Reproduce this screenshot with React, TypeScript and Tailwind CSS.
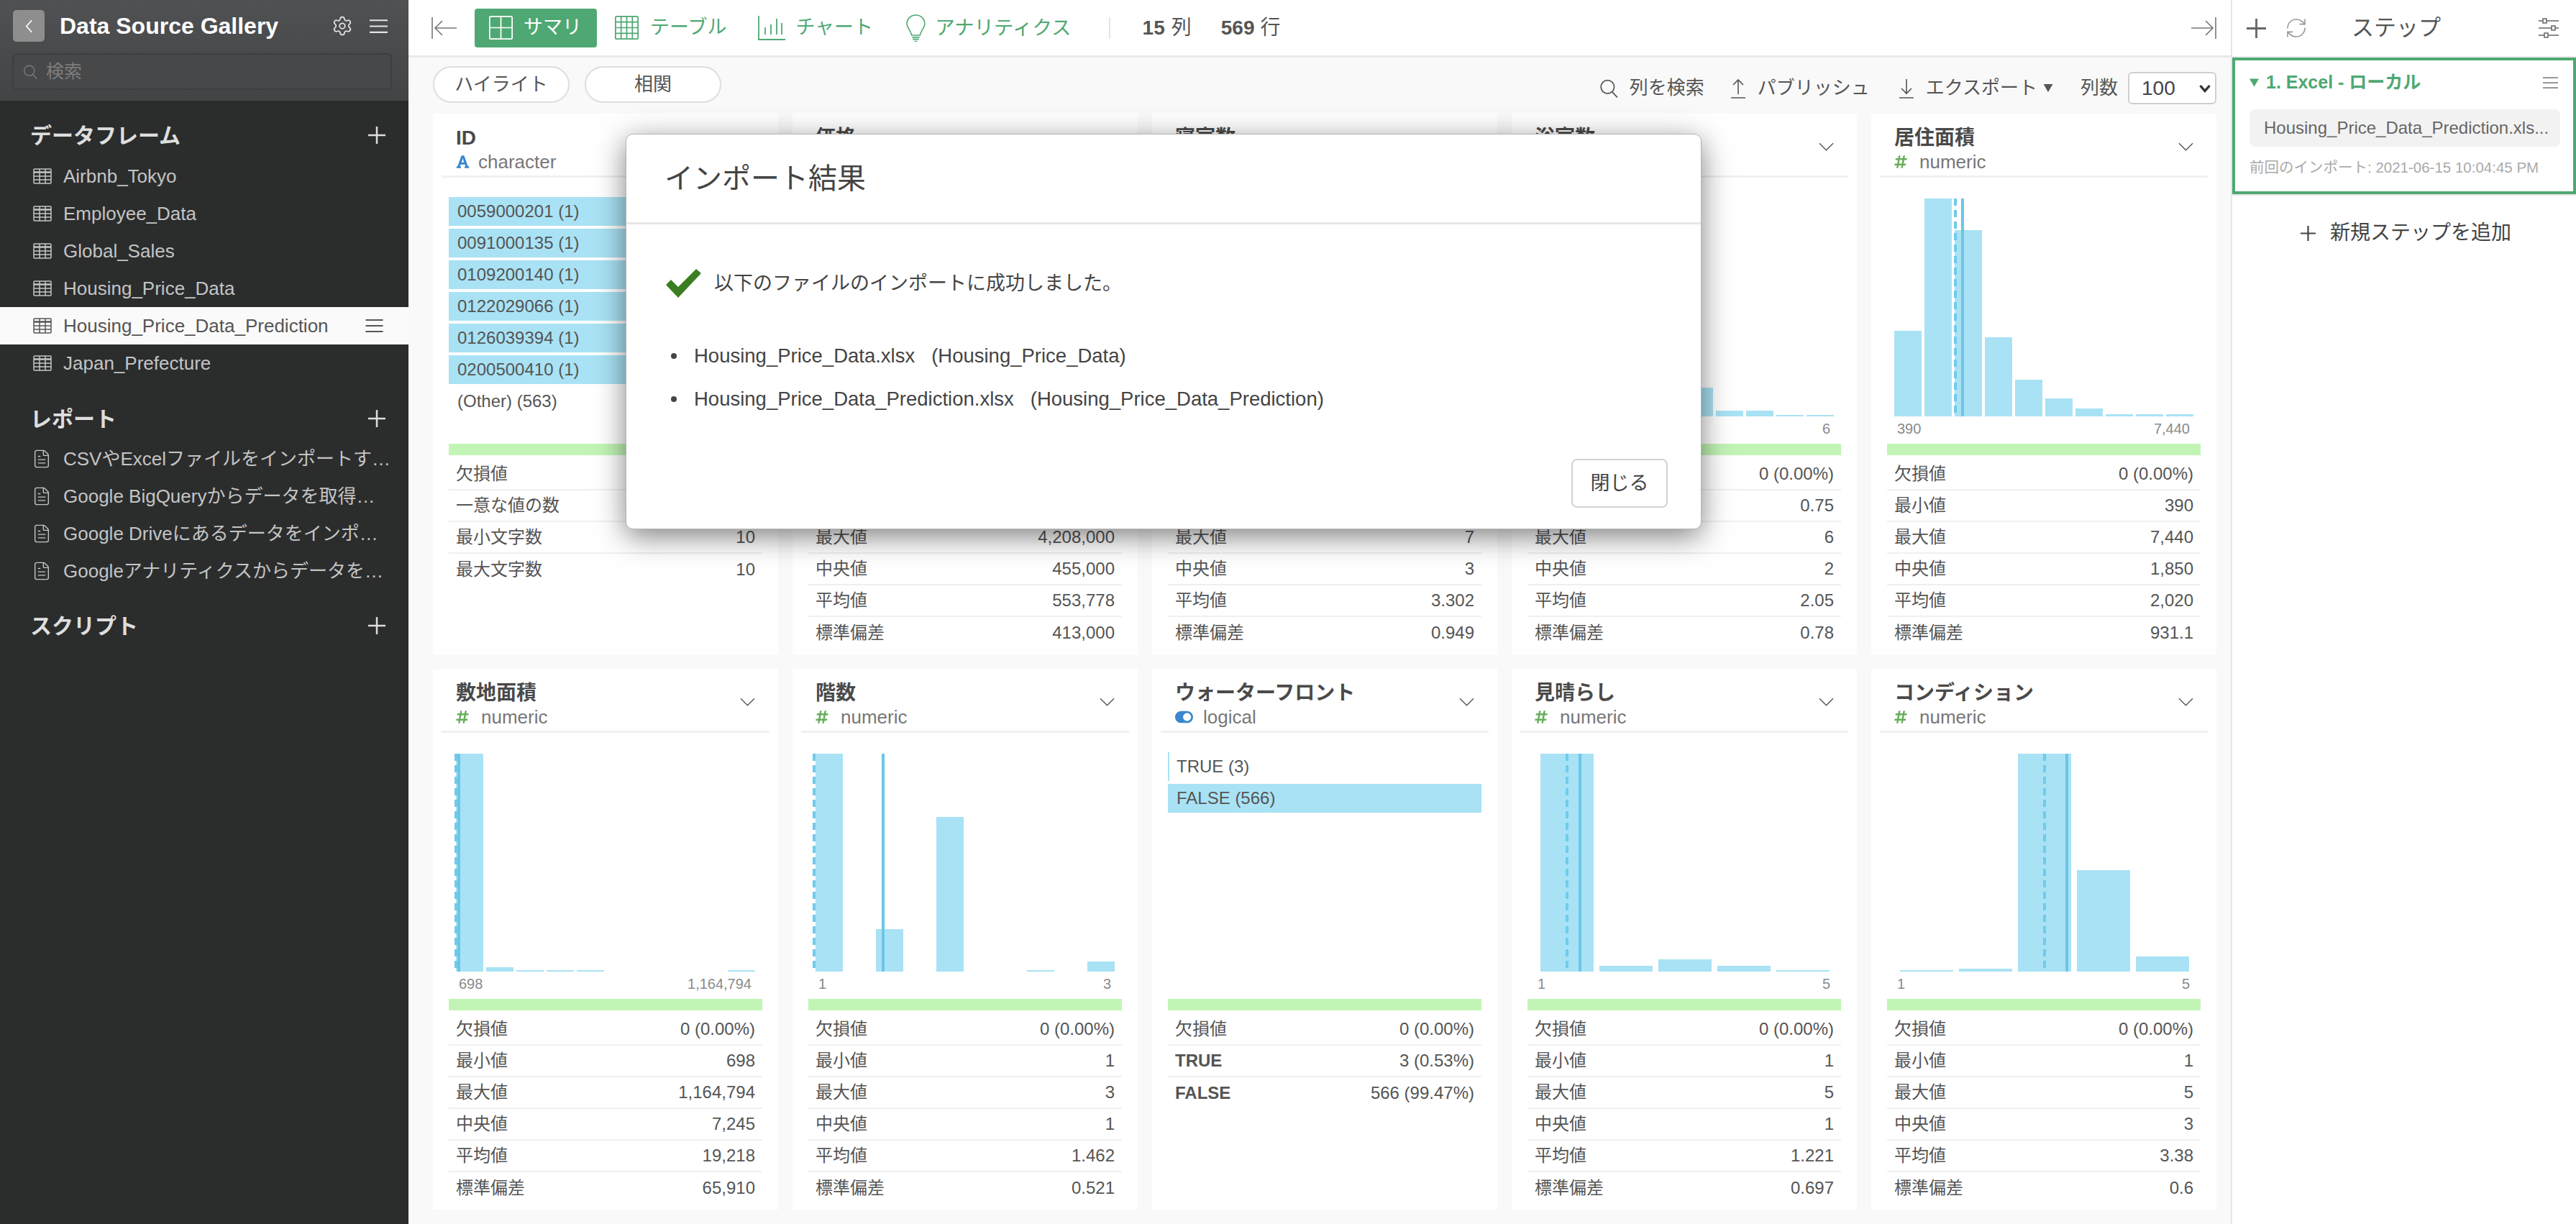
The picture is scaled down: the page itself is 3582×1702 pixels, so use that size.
import { FaFont, FaHashtag, FaToggleOn } from "react-icons/fa";
import { FileText, RefreshCw, Settings } from "lucide-react";

type Stat = [string, string, boolean?];
type Line = { dash: number; solid: number };
type Column = {
  title: string;
  kind: "numeric" | "character" | "logical";
  stats: Stat[];
  bars?: { x: number; w: number; h: number }[];
  lines?: Line;
  axis?: [string, string];
  cats?: { label: string; width: string }[];
};

const ten = (heights: number[]) => heights.map((h, i) => ({ x: 32 + i * 42, w: 38, h }));
const five = (heights: number[]) => heights.map((h, i) => ({ x: 40 + i * 82, w: 74, h }));

const numStats = (min: string, max: string, med: string, avg: string, sd: string): Stat[] => [
  ["欠損値", "0 (0.00%)"],
  ["最小値", min],
  ["最大値", max],
  ["中央値", med],
  ["平均値", avg],
  ["標準偏差", sd],
];

const columns: Column[] = [
  {
    title: "ID",
    kind: "character",
    cats: [
      { label: "0059000201 (1)", width: "w-full" },
      { label: "0091000135 (1)", width: "w-full" },
      { label: "0109200140 (1)", width: "w-full" },
      { label: "0122029066 (1)", width: "w-full" },
      { label: "0126039394 (1)", width: "w-full" },
      { label: "0200500410 (1)", width: "w-full" },
    ],
    stats: [
      ["欠損値", "0 (0.00%)"],
      ["一意な値の数", "569"],
      ["最小文字数", "10"],
      ["最大文字数", "10"],
    ],
  },
  {
    title: "価格",
    kind: "numeric",
    bars: ten([90, 303, 210, 100, 40, 20, 8, 4, 2, 2]),
    lines: { dash: 100, solid: 120 },
    axis: ["75,000", "4,208,000"],
    stats: numStats("75,000", "4,208,000", "455,000", "553,778", "413,000"),
  },
  {
    title: "寝室数",
    kind: "numeric",
    bars: ten([10, 60, 303, 200, 40, 8, 4, 2, 2, 2]),
    lines: { dash: 130, solid: 136 },
    axis: ["1", "7"],
    stats: numStats("1", "7", "3", "3.302", "0.949"),
  },
  {
    title: "浴室数",
    kind: "numeric",
    bars: ten([30, 303, 250, 160, 80, 40, 8, 8, 2, 2]),
    lines: { dash: 110, solid: 118 },
    axis: ["0.75", "6"],
    stats: numStats("0.75", "6", "2", "2.05", "0.78"),
  },
  {
    title: "居住面積",
    kind: "numeric",
    bars: ten([119, 303, 259, 110, 51, 25, 11, 3, 3, 3]),
    lines: { dash: 117, solid: 127 },
    axis: ["390", "7,440"],
    stats: numStats("390", "7,440", "1,850", "2,020", "931.1"),
  },
  {
    title: "敷地面積",
    kind: "numeric",
    bars: ten([303, 6, 2, 2, 2, 0, 0, 0, 0, 2]),
    lines: { dash: 32, solid: 36 },
    axis: ["698", "1,164,794"],
    stats: numStats("698", "1,164,794", "7,245", "19,218", "65,910"),
  },
  {
    title: "階数",
    kind: "numeric",
    bars: ten([303, 0, 59, 0, 215, 0, 0, 2, 0, 14]),
    lines: { dash: 30, solid: 126 },
    axis: ["1", "3"],
    stats: numStats("1", "3", "1", "1.462", "0.521"),
  },
  {
    title: "ウォーターフロント",
    kind: "logical",
    cats: [
      { label: "TRUE (3)", width: "w-[2px]" },
      { label: "FALSE (566)", width: "w-full" },
    ],
    stats: [
      ["欠損値", "0 (0.00%)"],
      ["TRUE", "3 (0.53%)", true],
      ["FALSE", "566 (99.47%)", true],
    ],
  },
  {
    title: "見晴らし",
    kind: "numeric",
    bars: five([303, 8, 17, 8, 2]),
    lines: { dash: 77, solid: 95 },
    axis: ["1", "5"],
    stats: numStats("1", "5", "1", "1.221", "0.697"),
  },
  {
    title: "コンディション",
    kind: "numeric",
    bars: five([2, 4, 303, 141, 21]),
    lines: { dash: 241, solid: 272 },
    axis: ["1", "5"],
    stats: numStats("1", "5", "3", "3.38", "0.6"),
  },
];

function Hamburger({ className }: { className: string }) {
  return (
    <svg viewBox="0 0 24 20" className={className} fill="none" stroke="currentColor" strokeWidth="2">
      <path d="M0 2h24M0 10h24M0 18h24" />
    </svg>
  );
}

function Plus({ className }: { className: string }) {
  return (
    <svg viewBox="0 0 24 24" className={className} fill="none" stroke="currentColor" strokeWidth="2.5">
      <path d="M12 0v24M0 12h24" />
    </svg>
  );
}

function SearchGlyph({ className }: { className: string }) {
  return (
    <svg viewBox="0 0 24 24" className={className} fill="none" stroke="currentColor" strokeWidth="1.6">
      <circle cx="10.5" cy="10" r="8.5" />
      <path d="M16.5 16.5 23 23.5" />
    </svg>
  );
}

function GridGlyph({ className, rows, cols, sw = 2 }: { className: string; rows: number; cols: number; sw?: number }) {
  const xs = Array.from({ length: cols - 1 }, (_, i) => ((i + 1) * 36) / cols);
  const ys = Array.from({ length: rows - 1 }, (_, i) => ((i + 1) * 36) / rows);
  return (
    <svg viewBox="0 0 38 38" className={className} fill="none" stroke="currentColor" strokeWidth={sw}>
      <rect x="1" y="1" width="36" height="36" rx="2" />
      {xs.map((x) => (
        <path key={`x${x}`} d={`M${x + 1} 1v36`} />
      ))}
      {ys.map((y) => (
        <path key={`y${y}`} d={`M1 ${y + 1}h36`} />
      ))}
    </svg>
  );
}

function TableGlyph() {
  return (
    <svg viewBox="0 0 26 22" className="h-[22px] w-[26px]" fill="none" stroke="currentColor" strokeWidth="1.5">
      <rect x="1" y="1" width="24" height="20" rx="1" />
      <path d="M1 5.5h24" strokeWidth="2.5" />
      <path d="M1 11h24M1 16h24M9 1v20M17 1v20" />
    </svg>
  );
}

function TypeIcon({ kind }: { kind: Column["kind"] }) {
  if (kind === "numeric") return <FaHashtag className="mr-[17px] h-[20px] w-[18px] text-[#68ae5c]" />;
  if (kind === "character") return <FaFont className="mr-[12px] h-[20px] w-[19px] text-[#3a87cf]" />;
  return <FaToggleOn className="mr-[14px] h-[26px] w-[25px] text-[#3a87cf]" />;
}

function Histogram({ bars, lines }: { bars: NonNullable<Column["bars"]>; lines?: Line }) {
  return (
    <svg viewBox="0 0 480 303" className="block h-[303px] w-[480px]">
      {bars.map((b) => (
        <rect key={b.x} x={b.x} y={303 - b.h} width={b.w} height={b.h} fill="#a9e2f4" />
      ))}
      {lines && (
        <>
          <path d={`M${lines.dash} 0V303`} stroke="#6fcbec" strokeWidth="4" strokeDasharray="10 6" />
          <path d={`M${lines.solid} 0V303`} stroke="#6cc6e6" strokeWidth="4" />
        </>
      )}
    </svg>
  );
}

function ColumnCard({ col }: { col: Column }) {
  return (
    <div className="h-[752px] bg-white">
      <div className="mx-3 flex h-[89px] items-start justify-between border-b-[3px] border-[#f0f0f0] pl-5 pr-5 pt-4">
        <div>
          <div className="text-[28px] leading-[36px] font-bold text-[#4a4a4a]">{col.title}</div>
          <div className="flex h-[30px] items-center text-[26px] leading-[30px] text-[#777]">
            <TypeIcon kind={col.kind} />
            {col.kind}
          </div>
        </div>
        <svg viewBox="0 0 22 12" className="mt-[24px] h-[12px] w-[21px]" fill="none" stroke="#555" strokeWidth="1.4">
          <path d="M1 1l10 10L21 1" />
        </svg>
      </div>

      <div className="h-[370px]">
        {col.bars ? (
          <div className="pt-[29px]">
            <Histogram bars={col.bars} lines={col.lines} />
            <div className="mt-[3px] flex justify-between pl-[36px] pr-[37px] text-[20px] leading-[28px] text-[#8a8a8a]">
              <span>{col.axis?.[0]}</span>
              <span>{col.axis?.[1]}</span>
            </div>
          </div>
        ) : (
          <div className="flex flex-col gap-1 px-[22px] pt-[27px]">
            {col.cats?.map((c) => (
              <div key={c.label} className="relative h-10 text-[24px] leading-10 text-[#555]">
                <div className={`absolute inset-y-0 left-0 bg-[#a9e2f4] ${c.width}`} />
                <span className="relative pl-3">{c.label}</span>
              </div>
            ))}
            {col.kind === "character" && (
              <div className="h-10 pl-3 text-[24px] leading-10 text-[#555]">(Other) (563)</div>
            )}
          </div>
        )}
      </div>

      <div className="mx-[22px] h-4 bg-[#c2f4b6]" />
      <div className="mx-[22px] mt-[5px]">
        {col.stats.map(([label, value, bold], i) => (
          <div
            key={label}
            className={`flex h-[44px] items-center justify-between px-[10px] text-[24px] text-[#555] ${
              i < col.stats.length - 1 ? "border-b-2 border-[#f0f0f0]" : ""
            }`}
          >
            <span className={bold ? "font-bold" : ""}>{label}</span>
            <span>{value}</span>
          </div>
        ))}
      </div>
    </div>
  );
}

function Sidebar() {
  const frames = ["Airbnb_Tokyo", "Employee_Data", "Global_Sales", "Housing_Price_Data", "Housing_Price_Data_Prediction", "Japan_Prefecture"];
  const reports = [
    "CSVやExcelファイルをインポートす…",
    "Google BigQueryからデータを取得…",
    "Google Driveにあるデータをインポ…",
    "Googleアナリティクスからデータを…",
  ];
  return (
    <aside className="flex w-[568px] shrink-0 flex-col bg-[#2b2d2d]">
      <div className="h-[140px] bg-gradient-to-b from-[#505153] to-[#434446] px-[17px] pt-[14px]">
        <div className="flex h-11 items-center">
          <div className="ml-px flex h-11 w-11 items-center justify-center rounded-[5px] bg-[#8e8e8e]">
            <svg viewBox="0 0 12 20" className="h-[19px] w-[11px]" fill="none" stroke="#fff" strokeWidth="1.8">
              <path d="M10 1 2 10l8 9" />
            </svg>
          </div>
          <div className="ml-[21px] text-[32px] font-bold text-white">Data Source Gallery</div>
          <Settings className="ml-auto h-[30px] w-[30px] text-[#e4e4e4]" strokeWidth={1.4} />
          <Hamburger className="ml-[23px] mr-[12px] h-[21px] w-[25px] text-[#e4e4e4]" />
        </div>
        <div className="mt-4 flex h-[51px] w-[528px] items-center rounded-[6px] border-2 border-[#3d3e40] bg-[#47484a] pl-[13px] text-[25px] text-[#7d7d7d]">
          <SearchGlyph className="h-[20px] w-[20px]" />
          <span className="ml-[12px]">検索</span>
        </div>
      </div>

      <div className="mt-[22px] flex h-[52px] items-center justify-between pl-[42px] pr-[32px] text-[30px] font-bold text-[#dedede]">
        データフレーム
        <Plus className="h-6 w-6" />
      </div>
      <div className="mt-[5px]">
        {frames.map((f) => {
          const active = f === "Housing_Price_Data_Prediction";
          return (
            <div
              key={f}
              className={`flex h-[52px] items-center pl-[46px] pr-[35px] text-[26px] ${
                active ? "bg-[#fafafa] text-[#555]" : "text-[#c4c4c4]"
              }`}
            >
              <TableGlyph />
              <span className="ml-4">{f}</span>
              {active && <Hamburger className="ml-auto h-[20px] w-[25px] text-[#555]" />}
            </div>
          );
        })}
      </div>

      <div className="mt-[25px] flex h-[52px] items-center justify-between pl-[42px] pr-[32px] text-[30px] font-bold text-[#dedede]">
        レポート
        <Plus className="h-6 w-6" />
      </div>
      <div className="mt-[4px]">
        {reports.map((r) => (
          <div key={r} className="flex h-[52px] items-center pl-[44px] text-[26px] whitespace-nowrap text-[#c4c4c4]">
            <FileText className="h-[30px] w-[28px] shrink-0" strokeWidth={1.2} />
            <span className="ml-[16px]">{r}</span>
          </div>
        ))}
      </div>

      <div className="mt-[24px] flex h-[52px] items-center justify-between pl-[42px] pr-[32px] text-[30px] font-bold text-[#dedede]">
        スクリプト
        <Plus className="h-6 w-6" />
      </div>
    </aside>
  );
}

function Toolbar() {
  return (
    <div className="flex h-[80px] items-center border-b-[3px] border-[#e9e9e9] bg-white pl-[32px] pr-[20px] text-[27px] text-[#4fa873]">
      <svg viewBox="0 0 36 30" className="h-[30px] w-[36px] text-[#777]" fill="none" stroke="currentColor" strokeWidth="1.6">
        <path d="M1 0v30M35 15H6M15 5 5 15l10 10" />
      </svg>
      <div className="ml-[24px] flex h-[54px] w-[170px] items-center rounded-[4px] bg-[#4fa873] pl-[18px] text-white">
        <GridGlyph className="h-[33px] w-[37px]" rows={2} cols={2} sw={2} />
        <span className="ml-[13px]">サマリ</span>
      </div>
      <GridGlyph className="ml-[23px] h-[33px] w-[37px]" rows={4} cols={4} />
      <span className="ml-[14px]">テーブル</span>
      <svg viewBox="0 0 38 34" className="ml-[44px] h-[34px] w-[38px]" fill="none" stroke="currentColor" strokeWidth="1.8">
        <path d="M1 0v33h37M10 16v10M18 12v14M26 4v22M33 10v16" />
      </svg>
      <span className="ml-[14px]">チャート</span>
      <svg viewBox="0 0 28 40" className="ml-[46px] h-[38px] w-[27px]" fill="none" stroke="currentColor" strokeWidth="1.7">
        <path d="M14 1C6.5 1 1 6.5 1 13.5c0 6.5 5.5 10 7 17h12c1.5-7 7-10.5 7-17C27 6.500 21.500 1 14 1ZM8.500 33.500h11M9.500 36.500h9M12 39.500h4" />
      </svg>
      <span className="ml-[13px] text-[27.500px]">アナリティクス</span>
      <div className="ml-[52px] h-[30px] w-[2px] bg-[#e4e4e4]" />
      <div className="ml-[45px] flex items-center text-[28px] text-[#555]">
        <b>15</b>
        <span className="ml-[9px]">列</span>
        <b className="ml-[41px]">569</b>
        <span className="ml-[8px]">行</span>
      </div>
      <svg viewBox="0 0 36 30" className="ml-auto h-[30px] w-[36px] text-[#777]" fill="none" stroke="currentColor" strokeWidth="1.6">
        <path d="M35 0v30M1 15h29M21 5l10 10-10 10" />
      </svg>
    </div>
  );
}

function ActionBar() {
  return (
    <div className="flex h-[78px] items-start pl-[34px] pr-[20px] pt-[12px] text-[26px] text-[#555]">
      <div className="flex h-[51px] w-[190px] items-center justify-center rounded-full border-2 border-[#dedede] bg-white">ハイライト</div>
      <div className="ml-[21px] flex h-[51px] w-[190px] items-center justify-center rounded-full border-2 border-[#dedede] bg-white">相関</div>
      <div className="ml-auto mt-2 flex h-[45px] items-center">
        <SearchGlyph className="h-[26px] w-[26px]" />
        <span className="ml-[16px]">列を検索</span>
        <svg viewBox="0 0 20 28" className="ml-[37px] h-[28px] w-[20px]" fill="none" stroke="currentColor" strokeWidth="1.6">
          <path d="M10 22V2M3 9l7-7 7 7M0 27h20" />
        </svg>
        <span className="ml-[17px]">パブリッシュ</span>
        <svg viewBox="0 0 20 28" className="ml-[41px] h-[28px] w-[20px]" fill="none" stroke="currentColor" strokeWidth="1.6">
          <path d="M10 1v20M3 14l7 7 7-7M0 27h20" />
        </svg>
        <span className="ml-[17px]">エクスポート</span>
        <svg viewBox="0 0 14 12" className="ml-[8px] h-[11px] w-[14px]" fill="#555">
          <path d="M0 0h14L7 12z" />
        </svg>
        <span className="ml-[38px]">列数</span>
        <div className="ml-[14px] flex h-[45px] w-[123px] items-center justify-between rounded-[6px] border-2 border-[#cfcfcf] bg-white pl-[17px] pr-[6px] text-[28px] text-[#444]">
          100
          <svg viewBox="0 0 16 12" className="h-[12px] w-[16px]" fill="none" stroke="#333" strokeWidth="3.4">
            <path d="M1.500 2 8 9.500 14.500 2" />
          </svg>
        </div>
      </div>
    </div>
  );
}

function StepPanel() {
  return (
    <aside className="w-[480px] shrink-0 border-l-2 border-[#e6e6e6] bg-white">
      <div className="flex h-[80px] items-center border-b-2 border-[#e9e9e9] pl-[20px] pr-[24px] text-[#666]">
        <Plus className="h-[27px] w-[27px]" />
        <RefreshCw className="ml-[26px] h-[32px] w-[32px] text-[#999]" strokeWidth={1.2} />
        <span className="ml-[61px] text-[31px] text-[#555]">ステップ</span>
        <svg viewBox="0 0 28 30" className="ml-auto h-[30px] w-[28px]" fill="none" stroke="currentColor" strokeWidth="1.5">
          <path d="M0 5h28M0 15h28M0 25h28" />
          <rect x="6" y="2" width="5" height="6" fill="#fff" />
          <rect x="18" y="12" width="5" height="6" fill="#fff" />
          <rect x="8" y="22" width="5" height="6" fill="#fff" />
        </svg>
      </div>
      <div className="h-[192px] border-b-2 border-[#e6e6e6]">
        <div className="h-[190px] border-4 border-[#4fa873] px-5 pt-[15px]">
          <div className="flex h-[32px] items-center text-[25px] font-bold text-[#4fa873]">
            <svg viewBox="0 0 14 12" className="mr-[10px] h-[12px] w-[13px]" fill="currentColor">
              <path d="M0 0h14L7 12z" />
            </svg>
            1. Excel - ローカル
            <Hamburger className="ml-auto mr-[1px] h-[18px] w-[21px] text-[#888]" />
          </div>
          <div className="mt-[21px] flex h-[52px] w-[432px] items-center rounded-[8px] bg-[#f2f2f2] pl-[20px] text-[24px] whitespace-nowrap text-[#666]">
            Housing_Price_Data_Prediction.xls...
          </div>
          <div className="mt-[15px] text-[20.500px] leading-[28px] whitespace-nowrap text-[#aaa]">前回のインポート: 2021-06-15 10:04:45 PM</div>
        </div>
      </div>
      <div className="mt-[32px] flex h-10 items-center pl-[95px] text-[28px] text-[#444]">
        <Plus className="h-[21px] w-[21px]" />
        <span className="ml-[20px]">新規ステップを追加</span>
      </div>
    </aside>
  );
}

function ImportDialog() {
  return (
    <div className="absolute left-[870px] top-[186px] flex h-[550px] w-[1496px] flex-col rounded-[10px] border border-[#b5b5b5] bg-white shadow-[0_10px_40px_rgba(0,0,0,0.5)]">
      <div className="flex h-[125px] items-center border-b-[3px] border-[#e8e8e8] pl-[53px] text-[40px] text-[#444]">インポート結果</div>
      <div className="flex-1 pl-[55px] pt-[62px] text-[#444]">
        <div className="flex h-10 items-center text-[27px]">
          <svg viewBox="0 0 49 40" className="h-10 w-[49px]" fill="#3b7e21">
            <polygon points="0,22 7,15 17,25 42,0 49,6 17,40" />
          </svg>
          <span className="ml-[18px]">以下のファイルのインポートに成功しました。</span>
        </div>
        <ul className="mt-[51px] text-[27.500px]">
          <li className="flex h-[60px] items-center">
            <span className="ml-[7px] h-[8px] w-[8px] rounded-full bg-[#444]" />
            <span className="ml-[24px] whitespace-pre">Housing_Price_Data.xlsx   (Housing_Price_Data)</span>
          </li>
          <li className="flex h-[60px] items-center">
            <span className="ml-[7px] h-[8px] w-[8px] rounded-full bg-[#444]" />
            <span className="ml-[24px] whitespace-pre">Housing_Price_Data_Prediction.xlsx   (Housing_Price_Data_Prediction)</span>
          </li>
        </ul>
      </div>
      <div className="flex justify-end pb-[29px] pr-[46px]">
        <div className="flex h-[68px] w-[134px] items-center justify-center rounded-[8px] border-2 border-[#d2d2d2] bg-white text-[27px] text-[#444]">閉じる</div>
      </div>
    </div>
  );
}

export default function App() {
  return (
    <div className="relative flex h-[1702px] w-[3582px] overflow-hidden bg-white font-['Liberation_Sans','Noto_Sans_CJK_JP',sans-serif]">
      <Sidebar />
      <main className="flex min-w-0 flex-1 flex-col bg-[#f9f9f9]">
        <Toolbar />
        <ActionBar />
        <div className="ml-[34px] grid w-[2480px] grid-cols-5 gap-5">
          {columns.map((c) => (
            <ColumnCard key={c.title} col={c} />
          ))}
        </div>
      </main>
      <StepPanel />
      <ImportDialog />
    </div>
  );
}
